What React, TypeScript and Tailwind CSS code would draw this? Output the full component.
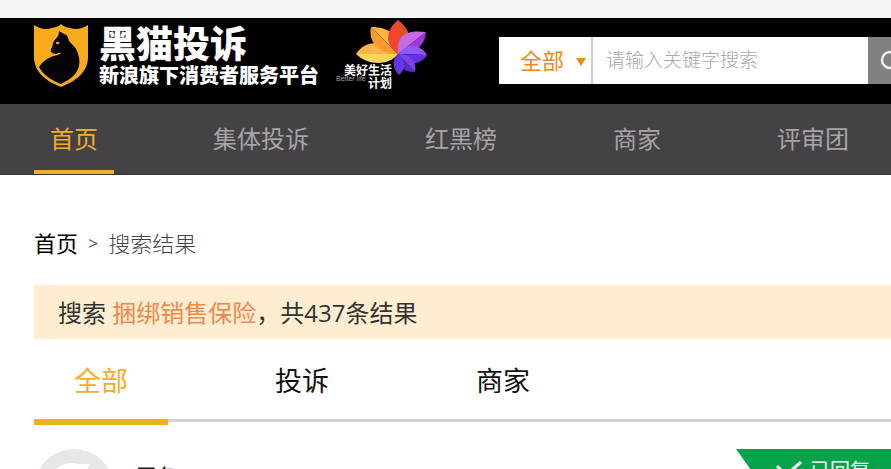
import { useState } from 'react';

interface Tab {
  label: string;
  className: string;
}

const navItems: Tab[] = [
  { label: '首页', className: 'w-20' },
  { label: '集体投诉', className: 'ml-[99px]' },
  { label: '红黑榜', className: 'ml-[116px]' },
  { label: '商家', className: 'ml-[116px]' },
  { label: '评审团', className: 'ml-[116px]' },
];

const resultTabs = ['全部', '投诉', '商家'];

function ShieldLogo() {
  return (
    <svg viewBox="0 0 54 64" className="h-16 w-[54px] shrink-0" aria-hidden="true">
      <path
        d="M0 1C6 5 12 6 18 4Q24 3 27 0Q30 3 36 4C42 6 48 5 54 1V33C54 48 42 57 27 63C12 57 0 48 0 33Z"
        fill="#f9ab1b"
      />
      <path
        d="M25 7L30 10C34 11 34 14 35 17C38 21 41 22 43 27C45 32 46 37 45 42C43 50 37 55 27 60C17 56 9 51 5 43C8 38 12 35 17 33C22 31 26 31 27 29C25 28 23 30 21 30C18 29 16 28 17 25C19 23 18 20 20 17C22 14 25 13 25 7Z"
        fill="#050505"
      />
      <path d="M22 19L25 18L24 20Z" fill="#f9ab1b" stroke="#f9ab1b" />
    </svg>
  );
}

function FlowerLogo() {
  return (
    <svg viewBox="0 0 72 56" className="h-14 w-[72px]" aria-hidden="true">
      <path d="M42 34C33 46 12 46 0 34Z" fill="#fbd45b" />
      <path d="M42 34H0C9 20 29 19 42 34Z" fill="#fdb44b" />
      <path d="M42 34C22 35 12 21 15 7Z" fill="#fb9a31" />
      <path d="M42 34L15 7C33 7 44 15 42 34Z" fill="#ffb541" />
      <path d="M42 34C26 22 32 8 42 0V34Z" fill="#f3442f" />
      <path d="M42 34V0C54 9 59 22 42 34Z" fill="#e0502c" />
      <path d="M42 34C40 17 49 9 70 12Z" fill="#c46be8" />
      <path d="M42 34L70 12C69 27 57 34 42 34Z" fill="#9d37dc" />
      <path d="M42 34C51 22 64 24 71 35Z" fill="#9159f3" />
      <path d="M42 34L71 35C63 47 50 45 42 34Z" fill="#6530df" />
      <path d="M42 34C55 34 61 43 59 52Z" fill="#7742ed" />
      <path d="M42 34L59 52C48 53 41 45 42 34Z" fill="#582ac7" />
      <path d="M42 34C51 42 49 50 43 55C36 48 36 40 42 34Z" fill="#6536e4" />
    </svg>
  );
}

function Header() {
  return (
    <header className="flex h-[86px] items-start bg-black pl-[34px] text-white">
      <a href="#" className="mt-[6px] flex shrink-0 items-start">
        <ShieldLogo />
        <span className="ml-[11px] block font-black">
          <span className="block text-[37px] leading-10">黑猫投诉</span>
          <span className="block text-[20px] leading-6">新浪旗下消费者服务平台</span>
        </span>
      </a>
      <a
        href="#"
        className="relative ml-[17px] mt-[2px] h-[72px] w-[92px] shrink-0 text-xs font-bold leading-3"
      >
        <span className="absolute left-5 top-0">
          <FlowerLogo />
        </span>
        <span className="absolute left-2 top-[45px] whitespace-nowrap">美好生活</span>
        <span className="absolute left-0 top-[53px] whitespace-nowrap font-['Liberation_Sans',sans-serif] text-[7px] font-normal text-neutral-400">
          Better life
        </span>
        <span className="absolute left-8 top-[58px] whitespace-nowrap">计划</span>
      </a>
      <form className="ml-[71px] mt-[19px] flex h-[47px] min-w-0 flex-1" onSubmit={(e) => e.preventDefault()}>
        <div className="relative w-[94px] shrink-0 border-r-2 border-[#ccc] bg-white">
          <select
            aria-label="搜索范围"
            className="h-full w-full appearance-none bg-transparent pl-[21px] text-[22px] text-[#ee8a12] outline-none"
          >
            <option>全部</option>
            <option>投诉</option>
            <option>商家</option>
          </select>
          <svg viewBox="0 0 10 8" className="pointer-events-none absolute right-[5px] top-[21px] h-2 w-[10px]">
            <path d="M0 0H10L5 8Z" fill="#ee8a12" />
          </svg>
        </div>
        <input
          type="text"
          aria-label="关键字"
          placeholder="请输入关键字搜索"
          className="min-w-0 flex-1 bg-white px-[13px] text-[19px] font-light outline-none placeholder:text-[#aaa]"
        />
        <button type="submit" aria-label="搜索" className="w-[23px] shrink-0 overflow-hidden bg-[#818181] pl-3">
          <svg viewBox="0 0 24 24" className="h-6 w-6" fill="none" stroke="#eee" strokeWidth="2.5">
            <circle cx="10" cy="11" r="8" />
            <path d="M16 17L23 24" />
          </svg>
        </button>
      </form>
    </header>
  );
}

export default function App() {
  const [activeTab, setActiveTab] = useState('全部');

  return (
    <div className="h-screen overflow-hidden bg-white pt-[18px] font-['Open_Sans','Noto_Sans_CJK_SC',sans-serif] text-[#222] [box-shadow:inset_0_18px_#f5f5f5]">
      <Header />

      {/* Main navigation */}
      <nav className="flex h-[71px] border-b border-[#343234] bg-[#444244] pl-[34px] text-[24px] text-[#a6a4a6]">
        {navItems.map((item, index) => (
          <a
            key={item.label}
            href="#"
            className={`flex shrink-0 justify-center whitespace-nowrap border-b-4 leading-[70px] ${item.className} ${
              index === 0 ? 'border-[#f2ae27] text-[#f2ae27]' : 'border-transparent'
            }`}
          >
            {item.label}
          </a>
        ))}
      </nav>

      <main className="pl-[34px]">
        {/* Breadcrumb */}
        <div className="flex gap-[10px] pb-[26px] pt-[52px] text-[22px] leading-8">
          <a href="#" className="text-black">首页</a>
          <span className="text-lg leading-8 text-[#555]">&gt;</span>
          <span className="font-light text-[#444]">搜索结果</span>
        </div>

        <p className="bg-[#feedd0] pl-6 pt-[2px] text-[24px] leading-[52px] text-[#333]">
          搜索 <span className="text-[#f0884a]">捆绑销售保险</span>，共437条结果
        </p>

        {/* Result type tabs */}
        <div className="flex h-[86px] gap-[67px] text-[27px] [box-shadow:inset_0_-3px_#fff,inset_0_-6px_#d2d2d2]">
          {resultTabs.map((tab) => (
            <button
              key={tab}
              type="button"
              onClick={() => setActiveTab(tab)}
              className={`w-[134px] shrink-0 border-b-[6px] pt-1 ${
                activeTab === tab ? 'border-[#f2ae1f] text-[#f2ae1f]' : 'border-transparent text-[#111]'
              }`}
            >
              {tab}
            </button>
          ))}
        </div>

        {/* First complaint */}
        <article className="flex items-start pt-6">
          <svg viewBox="0 0 80 80" className="h-20 w-20 shrink-0" aria-hidden="true">
            <circle cx="40" cy="40" r="40" fill="#e7e7ea" />
            <path d="M18 26C22 16 34 12 44 15L56 15L51 24C57 36 48 46 40 46C28 46 18 36 18 26Z" fill="#fff" />
          </svg>
          <div className="ml-[22px] mt-3 flex items-end gap-2 text-xl leading-8">
            <span>匿名</span>
            <span className="text-base leading-7 text-[#bbb]">于8小时前 发布</span>
          </div>
          <div className="ml-auto flex h-14 w-[155px] shrink-0 items-start bg-[#07a34b] pl-10 pt-3 text-xl text-white [clip-path:polygon(0_0,100%_0,100%_100%,40px_100%)]">
            <svg viewBox="0 0 26 20" className="h-5 w-[26px]" fill="none" stroke="white" strokeWidth="3">
              <path d="M1 5L10 14L25 1" />
            </svg>
            <span className="ml-2 leading-5">已回复</span>
          </div>
        </article>
      </main>
    </div>
  );
}
